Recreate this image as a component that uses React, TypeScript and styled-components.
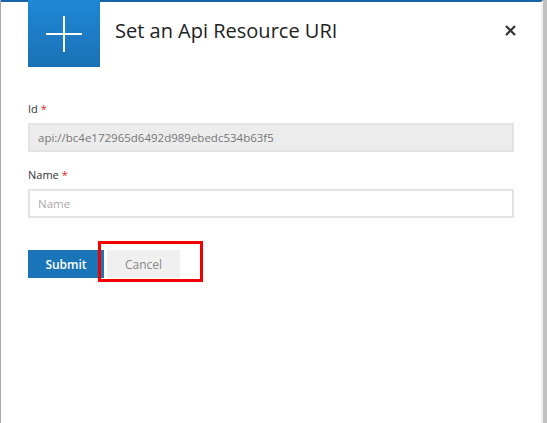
import styled, { createGlobalStyle } from "styled-components";

const GlobalStyle = createGlobalStyle`
  html, body {
    margin: 0;
    padding: 0;
    background: #ffffff;
  }
  body {
    font-family: "Open Sans", "Noto Sans", sans-serif;
  }
`;

const Page = styled.div`
  display: flex;
  width: 547px;
  height: 423px;
  overflow: hidden;
  box-sizing: border-box;
`;

const LeftEdge = styled.div`
  width: 1px;
  background: #aaaaaa;
  flex-shrink: 0;
`;

const Dialog = styled.div`
  flex: 1;
  display: flex;
  flex-direction: column;
  background: #ffffff;
  border-top: 2px solid #1565a8;
  border-right: 2px solid #eeeeee;
`;

const Scrollbar = styled.div`
  width: 4px;
  background: #c1c1c1;
  flex-shrink: 0;
`;

const Header = styled.div`
  display: flex;
  align-items: center;
  height: 65px;
  padding-left: 27px;
  padding-right: 24px;
`;

const IconBox = styled.div`
  width: 72px;
  height: 67px;
  margin-top: -2px;
  align-self: flex-start;
  background: linear-gradient(180deg, #1e88d6 0%, #1a71b5 100%);
  display: flex;
  align-items: center;
  justify-content: center;
  flex-shrink: 0;
`;

const Title = styled.h1`
  flex: 1;
  margin: -8px 0 0 15px;
  font-size: 20px;
  font-weight: 400;
  color: #222222;
`;

const CloseButton = styled.button`
  border: 0;
  background: none;
  padding: 0;
  margin-top: -8px;
  width: 14px;
  height: 14px;
  display: flex;
  align-items: center;
  justify-content: center;
  cursor: pointer;
`;

const Body = styled.div`
  display: flex;
  flex-direction: column;
  padding: 34px 27px 0 27px;
`;

const Field = styled.div`
  display: flex;
  flex-direction: column;
  margin-bottom: 15px;
`;

const Label = styled.label`
  font-size: 11px;
  line-height: 16px;
  color: #333333;
  margin-bottom: 6px;
`;

const Required = styled.span`
  color: #d9262c;
  margin-left: 3px;
`;

const Input = styled.input<{ $readOnly?: boolean }>`
  height: 29px;
  box-sizing: border-box;
  border: 2px solid #e3e3e3;
  background: ${(p) => (p.$readOnly ? "#ececec" : "#ffffff")};
  color: #777777;
  font-family: inherit;
  font-size: 11.5px;
  padding: 0 8px;
  outline: none;

  &::placeholder {
    color: #aaaaaa;
  }
`;

const Actions = styled.div`
  display: flex;
  gap: 3px;
  margin-top: 17px;
`;

const ButtonWrap = styled.div`
  position: relative;
`;

const Button = styled.button<{ $primary?: boolean }>`
  width: ${(p) => (p.$primary ? "76px" : "73px")};
  height: 28px;
  border: 0;
  font-family: inherit;
  font-size: 12px;
  font-weight: ${(p) => (p.$primary ? 600 : 400)};
  background: ${(p) => (p.$primary ? "#1a75b8" : "#f0f0f0")};
  color: ${(p) => (p.$primary ? "#ffffff" : "#888888")};
  cursor: pointer;
`;

const Highlight = styled.div`
  position: absolute;
  left: -9px;
  top: -9px;
  width: 105px;
  height: 41px;
  border: 3px solid #f20000;
  box-sizing: border-box;
  pointer-events: none;
`;

export default function App() {
  return (
    <>
      <GlobalStyle />
      <Page>
        <LeftEdge />
        <Dialog>
          <Header>
            <IconBox>
              <svg width="38" height="38" viewBox="0 0 38 38">
                <path d="M19 1v36M1 19h36" stroke="#ffffff" strokeWidth="2" />
              </svg>
            </IconBox>
            <Title>Set an Api Resource URI</Title>
            <CloseButton aria-label="Close">
              <svg width="11" height="11" viewBox="0 0 11 11">
                <path d="M1 1l9 9M10 1l-9 9" stroke="#333333" strokeWidth="2.2" />
              </svg>
            </CloseButton>
          </Header>
          <Body>
            <Field>
              <Label>
                Id<Required>*</Required>
              </Label>
              <Input $readOnly readOnly value="api://bc4e172965d6492d989ebedc534b63f5" />
            </Field>
            <Field>
              <Label>
                Name<Required>*</Required>
              </Label>
              <Input placeholder="Name" />
            </Field>
            <Actions>
              <Button $primary>Submit</Button>
              <ButtonWrap>
                <Button>Cancel</Button>
                <Highlight />
              </ButtonWrap>
            </Actions>
          </Body>
        </Dialog>
        <Scrollbar />
      </Page>
    </>
  );
}
